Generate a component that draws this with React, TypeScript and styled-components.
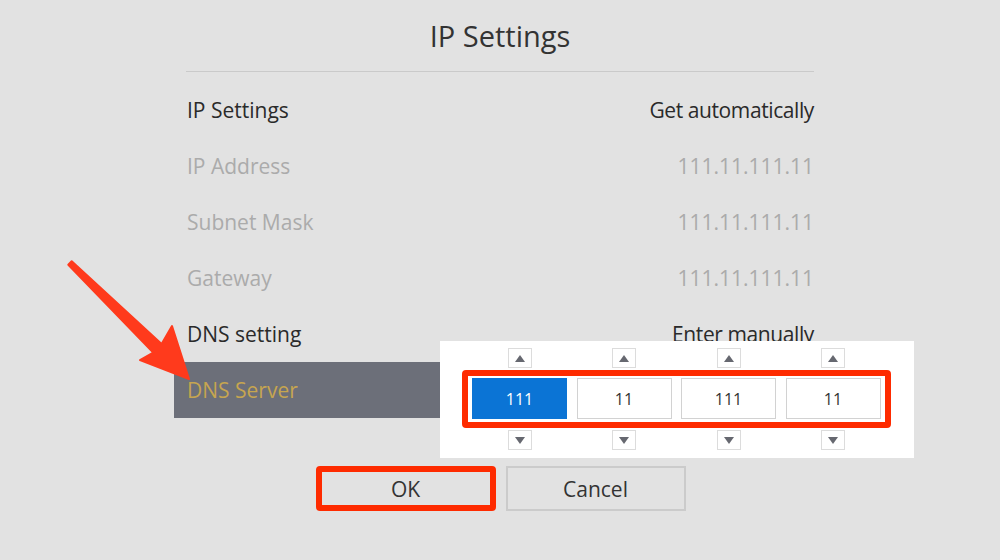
import React from "react";
import styled, { createGlobalStyle } from "styled-components";

const Global = createGlobalStyle`
  html, body { margin: 0; padding: 0; background: #e2e2e2; }
  body { font-family: "Open Sans", "Liberation Sans", sans-serif; }
  #root { width: 1000px; height: 560px; position: relative; overflow: hidden; }
`;

const Page = styled.div`
  width: 1000px;
  height: 560px;
  background: #e2e2e2;
  display: flex;
  justify-content: center;
`;

const Dialog = styled.div`
  width: 652px;
  display: flex;
  flex-direction: column;
`;

const Title = styled.div`
  height: 71px;
  display: flex;
  align-items: center;
  justify-content: center;
  font-size: 29px;
  color: #333;
  padding-bottom: 1px;
  box-sizing: border-box;
`;

const Divider = styled.div`
  height: 1px;
  margin: 0 12px;
  background: #cacaca;
`;

const List = styled.div`
  padding-top: 10px;
  display: flex;
  flex-direction: column;
`;

const Row = styled.div<{ $tone: "active" | "disabled" | "selected" }>`
  position: relative;
  height: 56px;
  padding: 0 12px 0 13px;
  display: flex;
  align-items: center;
  justify-content: space-between;
  font-size: 21px;
  color: ${(p) => (p.$tone === "disabled" ? "#ababab" : p.$tone === "selected" ? "#c6a550" : "#2a2a2a")};
  background: ${(p) => (p.$tone === "selected" ? "#6c6f79" : "transparent")};
`;

const Value = styled.span<{ $tight?: boolean }>`
  letter-spacing: ${(p) => (p.$tight ? "-0.4px" : "0")};
`;

const Popup = styled.div`
  position: absolute;
  left: 266px;
  top: -21px;
  width: 474px;
  height: 117px;
  box-sizing: border-box;
  background: #ffffff;
  padding: 7px 0 0 22px;
  display: flex;
  flex-direction: column;
  gap: 2px;
  z-index: 2;
`;

const ArrowRow = styled.div`
  display: grid;
  grid-template-columns: repeat(4, 95px);
  column-gap: 9.5px;
  padding-left: 10px;
  justify-items: center;
`;

const StepButton = styled.div`
  width: 24px;
  height: 20px;
  border: 1px solid #dcdcdc;
  box-sizing: border-box;
  display: flex;
  align-items: center;
  justify-content: center;
  background: #fff;
`;

const Frame = styled.div`
  width: 429px;
  box-sizing: border-box;
  border: 6px solid #fe2b00;
  border-radius: 4px;
  padding: 2px 5px 3px 4px;
  display: grid;
  grid-template-columns: repeat(4, 95px);
  column-gap: 9.5px;
`;

const Octet = styled.div<{ $focused?: boolean }>`
  height: 41px;
  box-sizing: border-box;
  display: flex;
  align-items: center;
  justify-content: center;
  font-size: 16px;
  color: ${(p) => (p.$focused ? "#ffffff" : "#333333")};
  background: ${(p) => (p.$focused ? "#0b74d5" : "#ffffff")};
  border: 1px solid ${(p) => (p.$focused ? "#0b74d5" : "#d2d2d2")};
`;

const Buttons = styled.div`
  margin-top: 48px;
  display: flex;
  justify-content: center;
  gap: 10px;
  padding-left: 1px;
`;

const Button = styled.div<{ $marked?: boolean }>`
  width: 180px;
  height: 45px;
  box-sizing: border-box;
  display: flex;
  align-items: center;
  justify-content: center;
  font-size: 21px;
  color: #333;
  background: #e2e2e2;
  border: ${(p) => (p.$marked ? "6px solid #fe2b00" : "2px solid #cbcbcb")};
  border-radius: ${(p) => (p.$marked ? "4px" : "0")};
`;

const Overlay = styled.svg`
  position: absolute;
  left: 0;
  top: 0;
  pointer-events: none;
  z-index: 5;
`;

const Up = () => (
  <svg width="10" height="7" viewBox="0 0 10 7">
    <polygon points="5,0 10,7 0,7" fill="#666870" />
  </svg>
);
const Down = () => (
  <svg width="10" height="7" viewBox="0 0 10 7">
    <polygon points="0,0 10,0 5,7" fill="#666870" />
  </svg>
);

const rows: { label: string; value?: string; tone: "active" | "disabled" | "selected"; tight?: boolean }[] = [
  { label: "IP Settings", value: "Get automatically", tone: "active", tight: true },
  { label: "IP Address", value: "111.11.111.11", tone: "disabled" },
  { label: "Subnet Mask", value: "111.11.111.11", tone: "disabled" },
  { label: "Gateway", value: "111.11.111.11", tone: "disabled" },
  { label: "DNS setting", value: "Enter manually", tone: "active", tight: true },
  { label: "DNS Server", tone: "selected" },
];

const octets = ["111", "11", "111", "11"];

export default function App() {
  return (
    <>
      <Global />
      <Page>
        <Dialog>
          <Title>IP Settings</Title>
          <Divider />
          <List>
            {rows.map((r) => (
              <Row key={r.label} $tone={r.tone}>
                <span>{r.label}</span>
                {r.value && <Value $tight={r.tight}>{r.value}</Value>}
                {r.tone === "selected" && (
                  <Popup>
                    <ArrowRow>
                      {octets.map((_, i) => (
                        <StepButton key={i}>
                          <Up />
                        </StepButton>
                      ))}
                    </ArrowRow>
                    <Frame>
                      {octets.map((o, i) => (
                        <Octet key={i} $focused={i === 0}>
                          {o}
                        </Octet>
                      ))}
                    </Frame>
                    <ArrowRow>
                      {octets.map((_, i) => (
                        <StepButton key={i}>
                          <Down />
                        </StepButton>
                      ))}
                    </ArrowRow>
                  </Popup>
                )}
              </Row>
            ))}
          </List>
          <Buttons>
            <Button $marked>OK</Button>
            <Button>Cancel</Button>
          </Buttons>
        </Dialog>
      </Page>
      <Overlay width="1000" height="560" viewBox="0 0 1000 560">
        <polygon
          points="68.3,264.8 71.7,261.2 161.6,343.9 172,326 189,379 140,360 153.2,352.5"
          fill="#ff3a1c"
          stroke="#ff3a1c"
          strokeWidth="2"
          strokeLinejoin="round"
        />
      </Overlay>
    </>
  );
}
